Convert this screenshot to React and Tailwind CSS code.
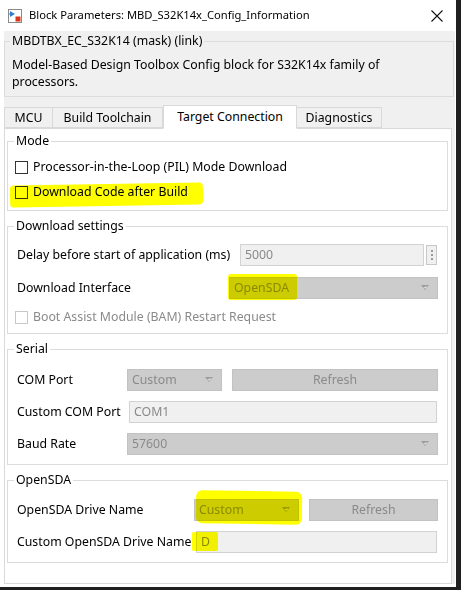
import React from "react";

const font = { fontFamily: '"Noto Sans", "Liberation Sans", Arial, sans-serif' };

function Arrow() {
  return (
    <svg width="8" height="6" viewBox="0 0 8 6" className="shrink-0">
      <path d="M0 0 L8 0 L4 5 Z" fill="#9c9c9c" />
      <path d="M2 3 L6 1 L5 3.5 Z" fill="#e8e8e8" />
    </svg>
  );
}

function Dropdown({ w, value }) {
  return (
    <div
      className="h-[22px] flex items-center justify-between bg-[#cccccc] border border-[#c2c2c2] pl-[4px] pr-[8px] text-[#8a8a8a]"
      style={{ width: w }}
    >
      <span>{value}</span>
      <Arrow />
    </div>
  );
}

function Button({ w, label }) {
  return (
    <div
      className="h-[22px] flex items-center justify-center bg-[#cccccc] border border-[#c2c2c2] text-[#8a8a8a]"
      style={{ width: w }}
    >
      {label}
    </div>
  );
}

function Input({ w, value }) {
  return (
    <div
      className="h-[22px] flex items-center bg-[#f0f0f0] border border-[#d2d2d2] pl-[4px] text-[#8a8a8a]"
      style={{ width: w }}
    >
      {value}
    </div>
  );
}

function Checkbox({ disabled }) {
  return (
    <span
      className={
        "w-[13px] h-[13px] shrink-0 bg-white border " +
        (disabled ? "border-[#c8c8c8]" : "border-[#333333]")
      }
    />
  );
}

function Group({ title, h, children }) {
  return (
    <fieldset className="border border-[#dcdcdc] min-w-0" style={{ height: h }}>
      <legend className="ml-[6px] px-[2px] leading-[16px]">{title}</legend>
      {children}
    </fieldset>
  );
}

function Tab({ label, active, w }) {
  return active ? (
    <div
      className="h-[24px] -mb-px bg-white border border-[#d9d9d9] border-b-white flex items-center justify-center z-10"
      style={{ width: w }}
    >
      {label}
    </div>
  ) : (
    <div
      className="h-[21px] bg-[#f0f0f0] border border-[#d9d9d9] -ml-px first:ml-0 flex items-center justify-center pt-[1px]"
      style={{ width: w }}
    >
      {label}
    </div>
  );
}

export default function App() {
  return (
    <div
      className="relative w-[461px] h-[590px] bg-[#202020] text-[12.3px] text-black overflow-hidden"
      style={font}
    >
      <div className="w-[456px] h-[587px] bg-white flex flex-col">
        {/* Title bar */}
        <div className="h-[31px] flex items-center shrink-0">
          <svg width="14" height="14" viewBox="0 0 14 14" className="ml-[8px]">
            <rect x="0.5" y="0.5" width="13" height="13" fill="#ffffff" stroke="#8a8a8a" />
            <path d="M2 2 L2 8 L7 5 Z" fill="#2f7fd8" />
            <rect x="1" y="4.5" width="2" height="1" fill="#2f7fd8" />
            <rect x="7.5" y="7.5" width="5" height="5" fill="#d9361c" />
          </svg>
          <span className="ml-[7px] text-[11.2px]">Block Parameters: MBD_S32K14x_Config_Information</span>
          <svg width="12" height="12" viewBox="0 0 12 12" className="ml-auto mr-[13px]">
            <path d="M0.5 0.5 L11.5 11.5 M11.5 0.5 L0.5 11.5" stroke="#111" strokeWidth="1.1" />
          </svg>
        </div>

        {/* Gray body */}
        <div className="ml-[4px] w-[451px] h-[553px] bg-[#f0f0f0] flex flex-col pt-[2px]">
          <fieldset className="border border-[#dcdcdc] mr-[1px] h-[64px] min-w-0">
            <legend className="ml-[5px] px-[2px] leading-[16px]">MBDTBX_EC_S32K14 (mask) (link)</legend>
            <div className="pl-[7px] pt-[7px] leading-[17px]">
              Model-Based Design Toolbox Config block for S32K14x family of
              <br />
              processors.
            </div>
          </fieldset>

          {/* Tabs */}
          <div className="mt-[7px] flex items-end h-[24px]">
            <Tab label="MCU" w={49} />
            <Tab label="Build Toolchain" w={111} />
            <Tab label="Target Connection" w={134} active />
            <Tab label="Diagnostics" w={86} />
          </div>

          {/* Pane */}
          <div className="w-[448px] h-[456px] bg-white border border-[#d9d9d9] pl-[2px] pr-[3px] pt-[4px] flex flex-col gap-[7px]">
            <Group title="Mode" h={78}>
              <div className="pt-[6px]">
                <div className="h-[25px] flex items-center gap-[5px] pl-[7px]">
                  <Checkbox />
                  <span>Processor-in-the-Loop (PIL) Mode Download</span>
                </div>
                <div className="h-[25px] flex items-center gap-[5px] pl-[7px]">
                  <Checkbox />
                  <span>Download Code after Build</span>
                </div>
              </div>
            </Group>

            <Group title="Download settings" h={116}>
              <div className="pt-[10px] flex flex-col">
                <div className="h-[22px] flex items-center pl-[9px]">
                  <span className="w-[223px]">Delay before start of application (ms)</span>
                  <Input w={184} value="5000" />
                  <div className="ml-[2px] w-[11px] h-[20px] bg-[#f0f0f0] border border-[#c8c8c8] flex flex-col items-center justify-center gap-[2px]">
                    <span className="w-[2px] h-[2px] bg-[#9a9a9a]" />
                    <span className="w-[2px] h-[2px] bg-[#9a9a9a]" />
                    <span className="w-[2px] h-[2px] bg-[#9a9a9a]" />
                  </div>
                </div>
                <div className="mt-[11px] h-[22px] flex items-center pl-[9px]">
                  <span className="w-[212px]">Download Interface</span>
                  <Dropdown w={209} value="OpenSDA" />
                </div>
                <div className="mt-[7px] h-[22px] flex items-center gap-[5px] pl-[7px] text-[#8a8a8a]">
                  <Checkbox disabled />
                  <span>Boot Assist Module (BAM) Restart Request</span>
                </div>
              </div>
            </Group>

            <Group title="Serial" h={124}>
              <div className="pt-[12px] flex flex-col gap-[10px]">
                <div className="h-[22px] flex items-center pl-[9px]">
                  <span className="w-[110px]">COM Port</span>
                  <Dropdown w={95} value="Custom" />
                  <div className="ml-[10px]">
                    <Button w={206} label="Refresh" />
                  </div>
                </div>
                <div className="h-[22px] flex items-center pl-[9px]">
                  <span className="w-[112px] whitespace-nowrap">Custom COM Port</span>
                  <Input w={308} value="COM1" />
                </div>
                <div className="h-[22px] flex items-center pl-[9px]">
                  <span className="w-[110px]">Baud Rate</span>
                  <Dropdown w={311} value="57600" />
                </div>
              </div>
            </Group>

            <Group title="OpenSDA" h={91}>
              <div className="pt-[11px] flex flex-col gap-[10px]">
                <div className="h-[22px] flex items-center pl-[9px]">
                  <span className="w-[177px]">OpenSDA Drive Name</span>
                  <Dropdown w={105} value="Custom" />
                  <div className="ml-[10px]">
                    <Button w={129} label="Refresh" />
                  </div>
                </div>
                <div className="h-[22px] flex items-center pl-[9px]">
                  <span className="w-[179px] whitespace-nowrap">Custom OpenSDA Drive Name</span>
                  <Input w={241} value="D" />
                </div>
              </div>
            </Group>
          </div>
        </div>
      </div>

      {/* Highlighter marks */}
      <div className="absolute left-[10px] top-[184px] w-[193px] h-[22px] bg-[#ffff00] mix-blend-multiply rounded-[4px] -rotate-[1deg]" />
      <div className="absolute left-[228px] top-[274px] w-[69px] h-[26px] bg-[#ffff00] mix-blend-multiply rounded-[3px]" />
      <div className="absolute left-[196px] top-[491px] w-[106px] h-[33px] bg-[#ffff00] mix-blend-multiply rounded-[6px] rotate-[1deg]" />
      <div className="absolute left-[192px] top-[532px] w-[26px] h-[19px] bg-[#ffff00] mix-blend-multiply rounded-[2px]" />
    </div>
  );
}
